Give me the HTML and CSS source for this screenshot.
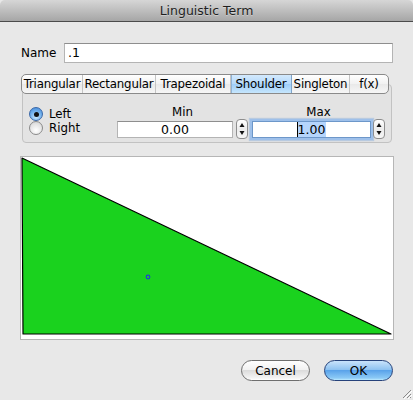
FILE: index.html
```html
<!DOCTYPE html>
<html>
<head>
<meta charset="utf-8">
<link rel="stylesheet" href="styles.css">
</head>
<body>
<div class="window">
  <div class="titlebar">Linguistic Term</div>
  <div class="content">
    <div class="name-row">
      <span class="name-label">Name</span>
      <div class="textfield name-field">.1</div>
    </div>
    <div class="tabs">
      <div class="tab tab-tri">Triangular</div>
      <div class="tab tab-rect">Rectangular</div>
      <div class="tab tab-trap">Trapezoidal</div>
      <div class="tab tab-sh selected">Shoulder</div>
      <div class="tab tab-single">Singleton</div>
      <div class="tab tab-fx">f(x)</div>
    </div>
    <div class="group">
      <div class="radios">
        <div class="radio-row"><span class="radio on"><span class="dot"></span></span><span class="radio-label">Left</span></div>
        <div class="radio-row"><span class="radio"></span><span class="radio-label">Right</span></div>
      </div>
      <div class="col col-min">
        <div class="col-label">Min</div>
        <div class="field-row">
          <div class="textfield num num-min">0.00</div>
          <div class="stepper"><svg width="12" height="20" viewBox="0 0 12 20"><path d="M6 4 L8.5 8 L3.5 8 Z" fill="#111"/><path d="M6 16 L8.5 12 L3.5 12 Z" fill="#111"/></svg></div>
        </div>
      </div>
      <div class="col col-max">
        <div class="col-label">Max</div>
        <div class="field-row">
          <div class="textfield num num-max focused"><span class="sel">1.00</span></div>
          <div class="stepper"><svg width="12" height="20" viewBox="0 0 12 20"><path d="M6 4 L8.5 8 L3.5 8 Z" fill="#111"/><path d="M6 16 L8.5 12 L3.5 12 Z" fill="#111"/></svg></div>
        </div>
      </div>
    </div>
    <div class="chart">
      <svg class="plot" width="372" height="182" viewBox="0 0 372 182">
        <polygon points="1,1 2,177 370,177" fill="#1ad21e" stroke="#000" stroke-width="1.2" stroke-linejoin="round"/>
        <circle cx="127" cy="120" r="1.8" fill="none" stroke="#1f3fd6" stroke-width="1.2"/>
      </svg>
    </div>
    <div class="buttons">
      <button class="btn btn-cancel">Cancel</button>
      <button class="btn btn-ok">OK</button>
    </div>
  </div>
  <div class="grip">
    <svg width="12" height="12" viewBox="0 0 12 12">
      <path d="M11 3 L3 11 M11 7 L7 11 M11 10 L10 11" stroke="#8a8a8a" stroke-width="1"/>
      <path d="M12 4 L4 12 M12 8 L8 12" stroke="#fff" stroke-width="1"/>
    </svg>
  </div>
</div>
</body>
</html>
```

FILE: styles.css
```css
* { box-sizing: border-box; }
html, body { margin: 0; padding: 0; }
body {
  width: 413px;
  height: 400px;
  overflow: hidden;
  background: #e8e8e8;
  font-family: "DejaVu Sans", "Lucida Grande", sans-serif;
  font-size: 12px;
  color: #000;
}
.window {
  position: relative;
  width: 413px;
  height: 400px;
  background: #e8e8e8;
  border-radius: 5px 5px 0 0;
  overflow: hidden;
}
.titlebar {
  height: 22px;
  line-height: 21px;
  text-align: center;
  font-size: 12.5px;
  color: #1e1e1e;
  text-shadow: 0 1px 0 rgba(255,255,255,0.35);
  background: linear-gradient(#d6d6d6, #a6a6a6);
  border-bottom: 1px solid #4c4c4c;
}
.content {
  padding: 0 20px 0 21px;
  display: flex;
  flex-direction: column;
}
.name-row {
  display: flex;
  align-items: center;
  margin-top: 21px;
  height: 20px;
}
.name-label {
  width: 43px;
}
.textfield {
  background: #fff;
  border: 1px solid #b4b4b4;
  border-top-color: #8e8e8e;
  height: 20px;
  line-height: 18px;
  padding: 0 3px;
  font-size: 12.5px;
}
.name-field {
  flex: 1;
}
.tabs {
  display: flex;
  margin-top: 11px;
  height: 20px;
  width: 368px;
  position: relative;
  z-index: 1;
  margin-bottom: -10px;
  border: 1px solid #8a8a8a;
  border-radius: 5px;
  background: linear-gradient(#ffffff, #f1f1f1 50%, #e9e9e9 51%, #f6f6f6);
  overflow: hidden;
}
.tab {
  height: 18px;
  line-height: 18px;
  text-align: center;
  border-right: 1px solid #c4c4c4;
  white-space: nowrap;
  font-size: 11.8px;
  letter-spacing: -0.2px;
}
.tab-tri { width: 61px; }
.tab-rect { width: 73px; }
.tab-trap { width: 75px; }
.tab-sh { width: 61px; }
.tab-single { width: 58px; }
.tab-fx { width: 38px; border-right: none; }
.tab.selected {
  background: linear-gradient(#d3e9fd, #b4d9fb 50%, #9ecdf8 51%, #c6e6fd);
  border-right-color: #7fa4c9;
  box-shadow: inset 1px 0 0 #8fb3d6;
}
.group {
  margin: 0 1px 0 1px;
  height: 59px;
  border: 1px solid #c2c2c2;
  border-radius: 4px;
  background: #e3e3e3;
  display: flex;
  padding: 20px 0 0 6px;
}
.radios {
  width: 88px;
  padding-top: 2px;
}
.radio-row {
  display: flex;
  align-items: center;
  height: 14px;
}
.radio {
  width: 14px;
  height: 14px;
  border-radius: 50%;
  border: 1px solid #8a8a8a;
  background: radial-gradient(circle at 50% 70%, #ffffff, #e4e4e4 60%, #cfcfcf);
  display: flex;
  align-items: center;
  justify-content: center;
  flex: none;
}
.radio.on {
  border-color: #3a68a8;
  background: radial-gradient(circle at 50% 75%, #c8e8ff, #6eaeeb 55%, #3f85d8);
}
.dot {
  width: 5px;
  height: 5px;
  border-radius: 50%;
  background: #111;
}
.radio-label {
  margin-left: 6px;
  font-size: 11.8px;
}
.col {
  display: flex;
  flex-direction: column;
}
.col-min { width: 131px; margin-left: 0; }
.col-max { width: 133px; margin-left: 4px; }
.col-label {
  text-align: center;
  height: 14px;
  line-height: 14px;
  font-size: 11.8px;
}
.field-row {
  display: flex;
  align-items: center;
  height: 20px;
  margin-top: 0;
}
.num {
  text-align: center;
  height: 17px;
  line-height: 16px;
  font-size: 12.5px;
  padding: 0;
}
.num-min { width: 116px; }
.num-max { width: 119px; }
.focused {
  border-color: #6d97c9;
  box-shadow: 0 0 0 2px #9ec0ea, 0 0 1px 3px rgba(120,165,220,0.4);
}
.sel {
  background: #b5d5fc;
  border-left: 1px solid #000;
  padding: 0 1px 0 0;
}
.stepper {
  width: 12px;
  height: 20px;
  margin-left: 3px;
  border: 1px solid #8e8e8e;
  border-radius: 4px;
  background: linear-gradient(#ffffff, #ececec 50%, #f6f6f6);
  display: flex;
  align-items: center;
  justify-content: center;
  overflow: hidden;
}
.col-max .stepper { margin-left: 2px; }
.stepper svg { flex: none; }
.chart {
  margin: 13px 0 0 -1px;
  width: 374px;
  height: 184px;
  border: 1px solid #b6b6b6;
  background: #fff;
}
.plot { display: block; }
.buttons {
  display: flex;
  justify-content: flex-end;
  gap: 14px;
  margin-top: 20px;
}
.btn {
  width: 69px;
  height: 21px;
  border-radius: 11px;
  font-family: "DejaVu Sans", sans-serif;
  font-size: 12px;
  color: #000;
  padding: 0;
  cursor: default;
}
.btn-cancel {
  border: 1px solid #6e6e6e;
  background: linear-gradient(#ffffff, #f2f2f2 45%, #dcdcdc 50%, #f4f4f4 90%, #ffffff);
}
.btn-ok {
  border: 1px solid #26427a;
  background: linear-gradient(#c9e3fb, #8fc3f1 45%, #5aa3ea 50%, #8ccaf6 90%, #c0ecff);
}
.grip {
  position: absolute;
  right: 1px;
  bottom: 1px;
  width: 12px;
  height: 12px;
}
.grip svg { display: block; }
```
